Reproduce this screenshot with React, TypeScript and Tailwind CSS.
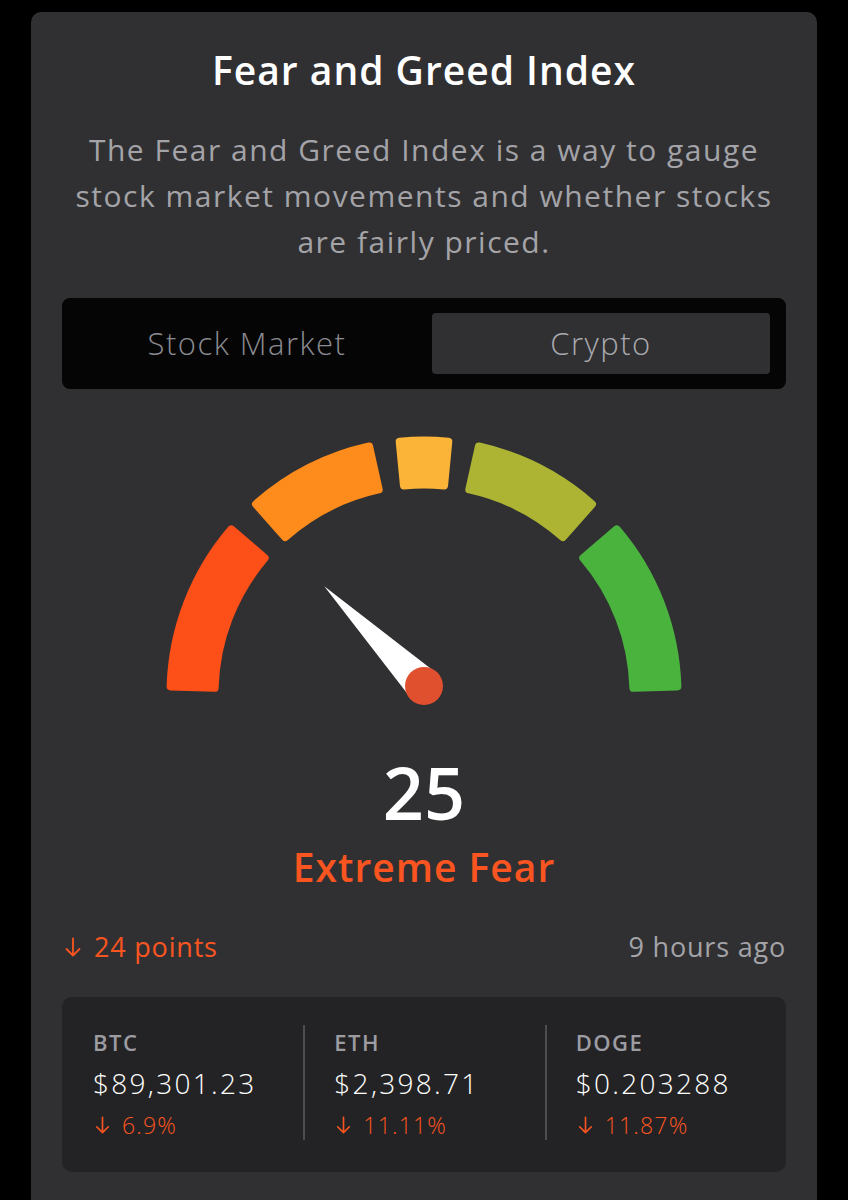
const CX = 362;
const CY = 284;
const R_OUT = 253.5;
const R_IN = 209.5;
const PX = CX;
const PY = CY - 8;

function polar(cx: number, cy: number, r: number, deg: number) {
  const a = (deg * Math.PI) / 180;
  return [cx + r * Math.cos(a), cy - r * Math.sin(a)];
}

// annular sector from angle a1 (larger) to a2 (smaller), degrees from +x axis
function sector(a1: number, a2: number) {
  const [x1, y1] = polar(CX, CY, R_OUT, a1);
  const [x2, y2] = polar(CX, CY, R_OUT, a2);
  const [x3, y3] = polar(CX, CY, R_IN, a2);
  const [x4, y4] = polar(CX, CY, R_IN, a1);
  return `M${x1} ${y1} A${R_OUT} ${R_OUT} 0 0 1 ${x2} ${y2} L${x3} ${y3} A${R_IN} ${R_IN} 0 0 0 ${x4} ${y4} Z`;
}

const segments = [
  { from: 178.3, to: 139.5, color: "#fd4f18" },
  { from: 131.5, to: 102.5, color: "#fd8c1c" },
  { from: 95.5, to: 84.5, color: "#fbb437" },
  { from: 77.5, to: 48.5, color: "#adb434" },
  { from: 40.5, to: 1.7, color: "#4ab33e" },
];

const coins = [
  { name: "BTC", price: "$89,301.23", change: "6.9%" },
  { name: "ETH", price: "$2,398.71", change: "11.11%" },
  { name: "DOGE", price: "$0.203288", change: "11.87%" },
];

function DownArrow({ className }: { className?: string }) {
  return (
    <svg viewBox="0 0 16 20" fill="none" stroke="currentColor" strokeWidth={1.8} strokeLinecap="round" strokeLinejoin="round" className={className}>
      <path d="M8 1.5V18.5M1.5 12L8 18.5L14.5 12" />
    </svg>
  );
}

function Gauge({ value }: { value: number }) {
  const angle = 180 - value * 1.8;
  const [tx, ty] = polar(PX, PY, 141, angle);
  const perp = ((angle - 90) * Math.PI) / 180;
  const w = 18;
  const bx1 = PX + w * Math.cos(perp);
  const by1 = PY - w * Math.sin(perp);
  const bx2 = PX - w * Math.cos(perp);
  const by2 = PY + w * Math.sin(perp);

  return (
    <svg width="724" height="320" viewBox="0 0 724 320" className="block">
      {segments.map((s) => (
        <path
          key={s.color}
          d={sector(s.from, s.to)}
          fill={s.color}
          stroke={s.color}
          strokeWidth={8}
          strokeLinejoin="round"
        />
      ))}
      <polygon points={`${tx},${ty} ${bx1},${by1} ${bx2},${by2}`} fill="#ffffff" />
      <circle cx={PX} cy={PY} r={19} fill="#e0502f" />
    </svg>
  );
}

export default function App() {
  return (
    <div className="min-h-[1200px] bg-black pt-[12px] font-['Open_Sans',sans-serif]">
      <div className="mx-[31px] rounded-[10px] bg-[#303032] px-[31px] pt-[36px] pb-[60px]">
        <h1 className="text-center text-[39px] font-semibold leading-[44px] tracking-[1px] text-white">
          Fear and Greed Index
        </h1>
        <p className="mt-[35px] text-center text-[30px] leading-[46px] tracking-[1.5px] text-[#a3a3a8]">
          The Fear and Greed Index is a way to gauge
          <br />
          stock market movements and whether stocks
          <br />
          are fairly priced.
        </p>

        <div className="mt-[33px] grid grid-cols-2 gap-[16px] rounded-[8px] bg-[#050505] px-[16px] py-[15px]">
          <button className="h-[61px] rounded-[4px] text-[31px] font-light tracking-[1.5px] text-[#8b8b91]">
            Stock Market
          </button>
          <button className="h-[61px] rounded-[4px] bg-[#303032] text-[31px] font-light tracking-[1.5px] text-[#a9a9ae]">
            Crypto
          </button>
        </div>

        <div className="mt-[21px]">
          <Gauge value={25} />
        </div>

        <div className="mt-[26px] text-center text-[72px] font-semibold leading-[72px] text-white">
          25
        </div>
        <div className="mt-[20px] text-center text-[39px] font-semibold leading-[38px] tracking-[1px] text-[#fa5520]">
          Extreme Fear
        </div>

        <div className="mt-[43px] flex items-center justify-between text-[27px] leading-[36px] tracking-[0.8px]">
          <div className="flex items-center gap-[13px] text-[#fa5520]">
            <DownArrow className="ml-[3px] h-[20px] w-[16px]" />
            <span>24 points</span>
          </div>
          <span className="text-[#a3a3a8]">9 hours ago</span>
        </div>

        <div className="mt-[32px] grid grid-cols-3 rounded-[10px] bg-[#232325] pt-[28px] pb-[32px]">
          {coins.map((c, i) => (
            <div
              key={c.name}
              className={
                i === 0
                  ? "pl-[31px]"
                  : "border-l-2 border-[#4d4d51] pl-[29px]"
              }
            >
              <div className="text-[22px] font-semibold leading-[34px] tracking-[1.5px] text-[#9c9ca2]">
                {c.name}
              </div>
              <div className="mt-[6px] text-[28px] font-light leading-[36px] tracking-[2.3px] text-white">
                {c.price}
              </div>
              <div className="mt-[9px] flex items-center gap-[12px] text-[23px] font-light leading-[30px] tracking-[1.2px] text-[#fa5520]">
                <DownArrow className="ml-[2px] h-[18px] w-[15px]" />
                <span>{c.change}</span>
              </div>
            </div>
          ))}
        </div>
      </div>
    </div>
  );
}
